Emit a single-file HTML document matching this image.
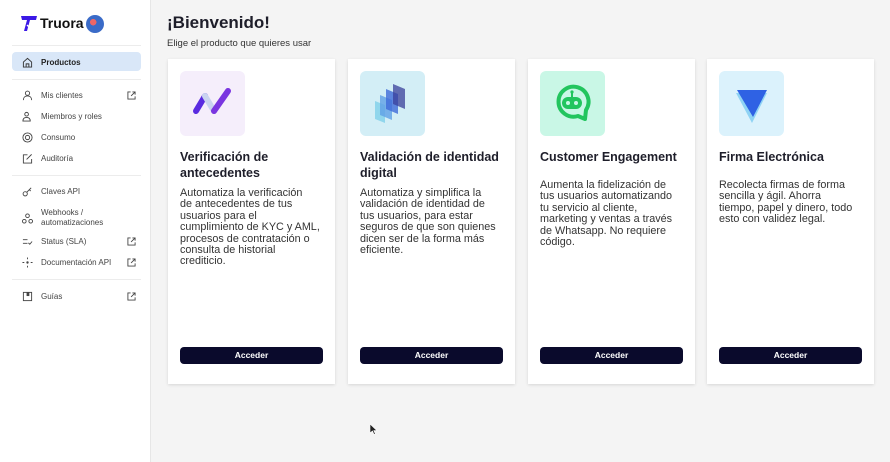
<!DOCTYPE html>
<html><head><meta charset="utf-8"><style>
*{margin:0;padding:0;box-sizing:border-box}
body{width:890px;height:462px;background:#f4f4f4;font-family:"Liberation Sans",sans-serif;position:relative;overflow:hidden;color:#1e1e2a}
.sb{position:absolute;left:0;top:0;width:151px;height:462px;background:#fff;border-right:1px solid #e6e6e6}
.hr{position:absolute;left:12px;width:129px;height:1px;background:#ececec}
.it{position:absolute;left:22px;font-size:8px;color:#444;display:flex;align-items:center;width:114px}
.it .ic{width:11px;height:11px;margin-right:8px;flex:none}
.it .ext{position:absolute;right:0;width:9px;height:9px}
.card{position:absolute;top:59px;width:167px;height:325px;background:#fff;box-shadow:0 1px 3px rgba(0,0,0,.12)}
.ib{position:absolute;left:12px;top:12px;width:65px;height:65px;border-radius:6px}
.t{position:absolute;left:12px;top:90px;font-size:12.5px;font-weight:bold;line-height:16px;color:#1e1e2a}
.d{position:absolute;left:12px;font-size:10.8px;line-height:11.4px;color:#333}
.btn{position:absolute;left:12px;top:288px;width:143px;height:17px;background:#0a0a2c;border-radius:4px;color:#fff;font-size:8.5px;text-align:center;line-height:17px;font-weight:bold}
</style></head><body>
<div class="sb">
 <div style="position:absolute;left:21px;top:15px;width:16px;height:16px">
  <svg width="16" height="17" viewBox="0 0 16 17"><path d="M0 1h16l-1 4H9l-3 11H3l3-11H1z" fill="#3b19e6"/><path d="M6 10l2 2 4-4" stroke="#fff" stroke-width="1.3" fill="none"/></svg>
 </div>
 <div style="position:absolute;left:40px;top:15px;font-size:14px;font-weight:bold;color:#111">Truora</div>
 <div style="position:absolute;left:86px;top:15px;width:18px;height:18px;border-radius:50%;background:radial-gradient(circle at 40% 40%,#e66 0 20%,#3a6bc8 22% 70%,#1b3c88)"></div>
 <div class="hr" style="top:45px"></div>
 <div style="position:absolute;left:12px;top:52px;width:129px;height:19px;background:#d9e7f8;border-radius:4px"></div>
 <div class="it" style="top:57px"><svg class="ic" viewBox="0 0 12 12"><path d="M1.5 5.5L6 1.5l4.5 4V11h-9z M4.5 11V7.5h3V11" stroke="#333" fill="none"/></svg><b style="color:#222">Productos</b></div>
 <div class="hr" style="top:79px"></div>
 <div class="it" style="top:90px"><svg class="ic" viewBox="0 0 12 12"><circle cx="6" cy="3.5" r="2.3" stroke="#444" fill="none"/><path d="M1.5 11c0-3 2-4.5 4.5-4.5s4.5 1.5 4.5 4.5" stroke="#444" fill="none"/></svg>Mis clientes<svg class="ext" viewBox="0 0 10 10"><path d="M4 1H1v8h8V6M6 1h3v3M9 1L4.5 5.5" stroke="#444" fill="none"/></svg></div>
 <div class="it" style="top:111px"><svg class="ic" viewBox="0 0 12 12"><circle cx="5" cy="3.5" r="2" stroke="#444" fill="none"/><path d="M1 11c0-3 1.8-4 4-4s4 1 4 4z" stroke="#444" fill="none"/></svg>Miembros y roles</div>
 <div class="it" style="top:132px"><svg class="ic" viewBox="0 0 12 12"><circle cx="6" cy="6" r="5" stroke="#444" fill="none"/><circle cx="6" cy="6" r="2.3" stroke="#444" fill="none"/></svg>Consumo</div>
 <div class="it" style="top:153px"><svg class="ic" viewBox="0 0 12 12"><path d="M6 2H1.5v9h9V6.5M5 7l5.5-5.5" stroke="#444" fill="none"/></svg>Auditoría</div>
 <div class="hr" style="top:175px"></div>
 <div class="it" style="top:186px"><svg class="ic" viewBox="0 0 12 12"><circle cx="3.5" cy="8.5" r="2.3" stroke="#444" fill="none"/><path d="M5 7l5-5M8 4l1.5 1.5" stroke="#444" fill="none"/></svg>Claves API</div>
 <div class="it" style="top:208px;line-height:10px"><svg class="ic" viewBox="0 0 12 12"><circle cx="6" cy="3" r="2" stroke="#444" fill="none"/><circle cx="2.5" cy="9" r="2" stroke="#444" fill="none"/><circle cx="9.5" cy="9" r="2" stroke="#444" fill="none"/></svg><span>Webhooks /<br>automatizaciones</span></div>
 <div class="it" style="top:236px"><svg class="ic" viewBox="0 0 12 12"><path d="M1 4h5M1 8h5M7 7.5l1.5 1.5L11 6" stroke="#444" fill="none"/></svg>Status (SLA)<svg class="ext" viewBox="0 0 10 10"><path d="M4 1H1v8h8V6M6 1h3v3M9 1L4.5 5.5" stroke="#444" fill="none"/></svg></div>
 <div class="it" style="top:257px"><svg class="ic" viewBox="0 0 12 12"><circle cx="6" cy="6" r="1.3" fill="#444"/><path d="M6 0.5v2M6 9.5v2M0.5 6h2M9.5 6h2" stroke="#444"/></svg>Documentación API<svg class="ext" viewBox="0 0 10 10"><path d="M4 1H1v8h8V6M6 1h3v3M9 1L4.5 5.5" stroke="#444" fill="none"/></svg></div>
 <div class="hr" style="top:279px"></div>
 <div class="it" style="top:291px"><svg class="ic" viewBox="0 0 12 12"><rect x="1.5" y="1.5" width="9" height="9" stroke="#444" fill="none"/><rect x="5" y="1.5" width="3" height="4" fill="#444"/></svg>Guías<svg class="ext" viewBox="0 0 10 10"><path d="M4 1H1v8h8V6M6 1h3v3M9 1L4.5 5.5" stroke="#444" fill="none"/></svg></div>
</div>

<div style="position:absolute;left:167px;top:13px;font-size:17px;font-weight:bold;color:#1e1e2a">¡Bienvenido!</div>
<div style="position:absolute;left:167px;top:38px;font-size:9.5px;color:#333">Elige el producto que quieres usar</div>

<div class="card" style="left:168px">
 <div class="ib" style="background:#f5eefb"><svg width="65" height="65" viewBox="0 0 65 65"><path d="M16 40L25 25" stroke="#5a2be0" stroke-width="6" stroke-linecap="round"/><path d="M25 25L34 40" stroke="#c9d3f0" stroke-width="6" stroke-linecap="round"/><path d="M34 40L48 20" stroke="#7a35e0" stroke-width="6" stroke-linecap="round"/></svg></div>
 <div class="t">Verificación de<br>antecedentes</div>
 <div class="d" style="top:129px">Automatiza la verificación<br>de antecedentes de tus<br>usuarios para el<br>cumplimiento de KYC y AML,<br>procesos de contratación o<br>consulta de historial<br>crediticio.</div>
 <div class="btn">Acceder</div>
</div>
<div class="card" style="left:348px">
 <div class="ib" style="background:#d3eef6"><svg width="65" height="65" viewBox="0 0 65 65"><path d="M15 30l10 4v18l-10-4z" fill="#7fd0ea" opacity=".8"/><path d="M20 24l12 5v20l-12-5z" fill="#5fa0e6" opacity=".8"/><path d="M26 18l12 5v20l-12-5z" fill="#3f6ad8" opacity=".8"/><path d="M33 13l12 5v20l-12-5z" fill="#3a3f9a" opacity=".75"/></svg></div>
 <div class="t">Validación de identidad<br>digital</div>
 <div class="d" style="top:129px">Automatiza y simplifica la<br>validación de identidad de<br>tus usuarios, para estar<br>seguros de que son quienes<br>dicen ser de la forma más<br>eficiente.</div>
 <div class="btn">Acceder</div>
</div>
<div class="card" style="left:528px">
 <div class="ib" style="background:#c9f7e6"><svg width="65" height="65" viewBox="0 0 65 65"><path d="M45 48L38 45A15 15 0 1 1 46 39z" stroke="#22c55e" stroke-width="4" fill="none" stroke-linejoin="round"/><rect x="22" y="26" width="20" height="12" rx="6" fill="#22c55e"/><circle cx="28" cy="32" r="2" fill="#c9f7e6"/><circle cx="36" cy="32" r="2" fill="#c9f7e6"/><path d="M32 26v-4" stroke="#22c55e" stroke-width="2"/><circle cx="32" cy="21" r="1.6" fill="#22c55e"/></svg></div>
 <div class="t">Customer Engagement</div>
 <div class="d" style="top:121px">Aumenta la fidelización de<br>tus usuarios automatizando<br>tu servicio al cliente,<br>marketing y ventas a través<br>de Whatsapp. No requiere<br>código.</div>
 <div class="btn">Acceder</div>
</div>
<div class="card" style="left:707px">
 <div class="ib" style="background:#dbf2fc"><svg width="65" height="65" viewBox="0 0 65 65"><path d="M17 22h31L33 52z" fill="#8fd3f4"/><path d="M18 19h30L34 46z" fill="#2f62e4"/></svg></div>
 <div class="t">Firma Electrónica</div>
 <div class="d" style="top:121px">Recolecta firmas de forma<br>sencilla y ágil. Ahorra<br>tiempo, papel y dinero, todo<br>esto con validez legal.</div>
 <div class="btn">Acceder</div>
</div>
<svg style="position:absolute;left:370px;top:424px" width="8" height="11" viewBox="0 0 8 11"><path d="M0 0v9l2.5-2 1.5 3.5 1.3-.6-1.5-3.3H7z" fill="#222" stroke="#fff" stroke-width=".6"/></svg>
</body></html>
